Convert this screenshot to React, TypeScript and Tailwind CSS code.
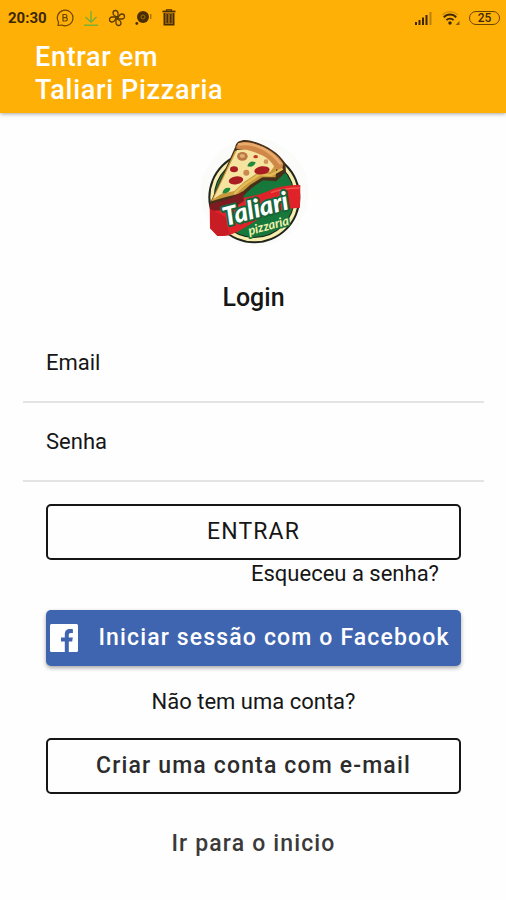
import React from "react";

function ChatIcon() {
  return (
    <svg width="18" height="18" viewBox="0 0 18 18" fill="none" stroke="#6b4400" strokeWidth="1.2" aria-hidden="true">
      <path d="M2 16.500l.6-3.300A7.800 7.800 0 1 1 5.800 16z" strokeLinejoin="round" />
      <path d="M7 5.500h2.300a1.500 1.500 0 0 1 0 3.200H7zM7 8.700h2.700a1.600 1.600 0 0 1 0 3.300H7z" />
    </svg>
  );
}

function DownloadIcon() {
  return (
    <svg width="16" height="18" viewBox="0 0 16 18" fill="none" stroke="#7fae35" strokeWidth="1.5" aria-hidden="true">
      <path d="M8 2v11M2.500 8 8 13.200 13.500 8M1 16.300h14" />
    </svg>
  );
}

function PinwheelIcon() {
  return (
    <svg width="18" height="18" viewBox="0 0 18 18" fill="none" stroke="#5a3a00" strokeWidth="1.3" strokeLinejoin="round" aria-hidden="true">
      <path d="M9 9V4.500a2.500 2.500 0 0 0-5 0c0 1.500 1 2.500 2 3z" transform="translate(1 -.5)" />
      <path d="M9 9V4.500a2.500 2.500 0 0 0-5 0c0 1.500 1 2.500 2 3z" transform="rotate(90 9 9) translate(1 -.5)" />
      <path d="M9 9V4.500a2.500 2.500 0 0 0-5 0c0 1.500 1 2.500 2 3z" transform="rotate(180 9 9) translate(1 -.5)" />
      <path d="M9 9V4.500a2.500 2.500 0 0 0-5 0c0 1.500 1 2.500 2 3z" transform="rotate(270 9 9) translate(1 -.5)" />
    </svg>
  );
}

function DiscIcon() {
  return (
    <svg width="18" height="16" viewBox="0 0 18 16" aria-hidden="true">
      <circle cx="8" cy="7" r="6" fill="#4a2d00" />
      <circle cx="8" cy="7" r="2" fill="none" stroke="#a06b00" strokeWidth="1" />
      <circle cx="1.800" cy="13.500" r="1.400" fill="#4a2d00" />
      <path d="M15.800 4v5" stroke="#a06b00" strokeWidth="1.200" />
    </svg>
  );
}

function TrashIcon() {
  return (
    <svg width="14" height="17" viewBox="0 0 14 17" aria-hidden="true">
      <path d="M0.500 2.500h13" stroke="#4a2d00" strokeWidth="1.800" />
      <path d="M4.500 2V0.800h5V2" fill="none" stroke="#4a2d00" strokeWidth="1.200" />
      <path d="M2.300 4v11.700h9.400V4" fill="#94620a" stroke="#4a2d00" strokeWidth="1.600" />
      <path d="M5.300 5v9M8.700 5v9" stroke="#4a2d00" strokeWidth="1.300" />
    </svg>
  );
}

function SignalIcon() {
  return (
    <svg width="19" height="14" viewBox="0 0 19 14" aria-hidden="true">
      <path d="M2 14v-3M5.500 14V9M9 14V6.500M12.500 14V4" stroke="#3d2700" strokeWidth="2" />
      <path d="M16.500 14V1" stroke="#b98012" strokeWidth="2" />
    </svg>
  );
}

function WifiIcon() {
  return (
    <svg width="20" height="16" viewBox="0 0 20 16" fill="none" strokeWidth="1.800" aria-hidden="true">
      <path d="M1.500 5a10 10 0 0 1 15 0" stroke="#d18f08" strokeWidth="1.300" />
      <path d="M2.800 7.300a8.300 8.300 0 0 1 12.400 0M5.400 10.200a5 5 0 0 1 7.200 0" stroke="#3d2700" />
      <circle cx="9" cy="13" r="1.700" fill="#3d2700" />
      <path d="M18.500 11v4h-4z" fill="#8a5a00" />
    </svg>
  );
}

function PizzariaLogo() {
  return (
    <svg width="130" height="125" viewBox="-6 0 390 375" role="img" aria-label="Taliari Pizzaria">
      <circle cx="191" cy="188" r="162" fill="#fbfbfa" />
      <circle cx="190" cy="202" r="138" fill="#20251c" />
      <circle cx="190" cy="202" r="132" fill="#f6edae" />
      <circle cx="190" cy="202" r="122" fill="#20251c" />
      <circle cx="190" cy="202" r="119" fill="#16783b" />

      {/* Slice: outline, cheese, side edge and crust */}
      <path d="M55 224 133 50c2-18 24-23 46-18 44 10 84 36 104 68l2 26-30 28-38-3-34 22-30 28-40 10-40 17z" fill="#47301a" />
      <path d="M61 214 132 62l42-4 44 20 38 30-2 34-40 0-36 22-28 26-48 12z" fill="#c89a3c" />
      <path d="M67 207 138 60l36-4 44 17 34 32-14 20-30-2-48 32-30 28-38 8z" fill="#f7e3a0" />
      <path d="M136 50c6-15 28-17 48-11 42 12 78 34 93 62l-4 19c-10 4-18-2-23-10-14-23-30-32-53-41-22-9-38-12-61-13z" fill="#d08848" />
      <path d="M144 43c50-8 96 20 124 57" fill="none" stroke="#e9ab6c" strokeWidth="8" strokeLinecap="round" />
      <path d="m130 192 29-28 48-32 32 4 36-20" fill="none" stroke="#e4bd59" strokeWidth="7" />
      <ellipse cx="154" cy="79" rx="16" ry="13" fill="#b97748" />
      <ellipse cx="154" cy="78" rx="8" ry="6" fill="#e0ad6c" />
      <ellipse cx="213" cy="121" rx="23" ry="12" fill="#a91c21" transform="rotate(-8 213 121)" />
      <ellipse cx="135" cy="151" rx="22" ry="12" fill="#a91c21" transform="rotate(-10 135 151)" />
      <ellipse cx="129" cy="118" rx="12" ry="9" fill="#a91c21" />
      <ellipse cx="194" cy="80" rx="7" ry="5" fill="#c23425" />
      <path d="M169 109c4-15 14-17 25-12-3 11-13 16-25 12M94 190c3-15 14-19 24-15 0 10-12 17-24 15" fill="#1d8a3c" />
      <circle cx="166" cy="128" r="9" fill="#c98953" />
      <circle cx="225" cy="95" r="7" fill="#d09458" />

      {/* Ribbon wrapped over the badge */}
      <path d="M56 224c50-14 130-20 178-42 34-14 64-17 94-17l-1 68c-50 2-96 18-128 36-32 19-66 46-100 49l-20 0-22-23z" fill="#df2328" />
      <path d="m57 222 60-16 38-22 4 28-40 28-62 2z" fill="#7c1b20" />
      <path d="M57 236 104 262l12 54-36 2-22-23z" fill="#c81d24" />
      <path d="M240 188c30-11 58-14 86-14" fill="none" stroke="#f4554c" strokeWidth="4" />

      <g transform="rotate(-15 195 240)" fontFamily="Lato, sans-serif" fontStyle="italic" textAnchor="middle">
        <text x="194" y="263" fontSize="77" fontWeight="900" fill="#ffffff" stroke="#17653a" strokeWidth="12" strokeLinejoin="round" paintOrder="stroke">
          Taliari
        </text>
        <text x="219" y="308" fontSize="38" fontWeight="700" fill="#f5f2b0" stroke="#16783b" strokeWidth="10" strokeLinejoin="round" paintOrder="stroke">
          pizzaria
        </text>
      </g>
    </svg>
  );
}

function FacebookIcon() {
  return (
    <svg width="28" height="28" viewBox="0 0 28 28" aria-hidden="true" className="shrink-0">
      <rect width="28" height="28" rx="1.500" fill="#ffffff" />
      <path d="M14.800 28V17.400h-3.800v-4h3.800v-3c0-3.600 2-5.400 5.300-5.400 1.200 0 2.200.1 2.800.2v3.700h-2c-1.600 0-2.100.8-2.100 2v2.500h4l-.6 4h-3.400V28z" fill="#4065b0" />
    </svg>
  );
}

function Field({ id, label, type }: { id: string; label: string; type: string }) {
  return (
    <div className="flex h-[79px] items-center border-b-2 border-[#e4e4e4] px-[23px]">
      <label htmlFor={id} className="text-[22px] leading-8">
        {label}
      </label>
      <input id={id} type={type} className="ml-4 h-12 min-w-0 flex-1 bg-transparent text-[22px] outline-none" />
    </div>
  );
}

export default function App() {
  return (
    <div className="min-h-screen bg-[#fefefe] font-['Roboto',sans-serif] text-[#161616]">
      <header className="bg-[#ffb007] pb-[6px] shadow-[0_1px_4px_rgba(0,0,0,0.35)]">
        <div className="flex h-[35px] items-center justify-between pl-[8px] pr-[6px] text-[#3d2700]">
          <div className="flex items-center gap-[9px]">
            <span className="text-[15px] font-bold leading-5">20:30</span>
            <ChatIcon />
            <DownloadIcon />
            <PinwheelIcon />
            <DiscIcon />
            <TrashIcon />
          </div>
          <div className="flex items-center gap-[8px]">
            <SignalIcon />
            <WifiIcon />
            <span className="flex h-[14px] w-[31px] items-center justify-center rounded-full border border-[#6b4400] text-[12px] font-medium leading-3">
              25
            </span>
          </div>
        </div>
        <h1 className="px-[35px] pt-[6px] text-[27px] font-medium leading-[33px] tracking-wide text-white">
          Entrar em
          <br />
          Taliari Pizzaria
        </h1>
      </header>

      <main className="pb-4 pl-[23px] pr-[22px] pt-[17px]">
        <div className="flex justify-center">
          <PizzariaLogo />
        </div>
        <h2 className="mt-[27px] text-center text-[25px] font-medium leading-8">Login</h2>

        <form className="mt-[10px]" onSubmit={(event) => event.preventDefault()}>
          <Field id="email" label="Email" type="email" />
          <Field id="senha" label="Senha" type="password" />

          <div className="flex flex-col px-[23px] pt-[22px]">
            <button type="submit" className="h-14 rounded-[5px] border-2 border-[#161616] text-[23px] tracking-wider">
              ENTRAR
            </button>
            <a href="#recuperar" className="mr-[22px] self-end text-[22px] leading-[28px]">
              Esqueceu a senha?
            </a>
            <button
              type="button"
              className="mt-[22px] flex h-14 items-center rounded-[5px] bg-[#4065b0] pl-[4px] pr-[11px] text-[23px] font-medium text-white shadow-[0_2px_4px_rgba(0,0,0,0.35)]"
            >
              <FacebookIcon />
              <span className="flex-1 whitespace-nowrap pl-[20px] text-center tracking-wider">Iniciar sessão com o Facebook</span>
            </button>
            <p className="mt-[20px] text-center text-[22px] leading-8">Não tem uma conta?</p>
            <button type="button" className="mt-[20px] h-14 rounded-[5px] border-2 border-[#161616] text-[23px] font-medium tracking-wider text-[#2c2c2c]">
              Criar uma conta com e-mail
            </button>
            <a href="#inicio" className="mt-[34px] self-center text-[23px] font-medium leading-8 tracking-wider text-[#3a3a3a]">
              Ir para o inicio
            </a>
          </div>
        </form>
      </main>
    </div>
  );
}
